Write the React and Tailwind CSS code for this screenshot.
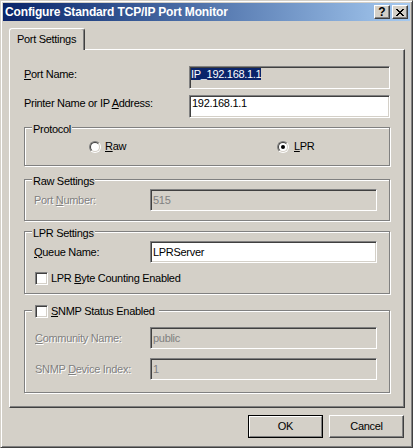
import React from "react";

const SUNKEN =
  "border border-t-[#808080] border-l-[#808080] border-b-white border-r-white shadow-[inset_1px_1px_0_#404040,inset_-1px_-1px_0_#D4D0C8]";
const RAISED =
  "border border-t-white border-l-white border-b-[#404040] border-r-[#404040] shadow-[inset_-1px_-1px_0_#808080]";
const DISABLED = "text-[#808080] [text-shadow:1px_1px_0_#fff]";

function CaptionBtn({ children }) {
  return (
    <div className={"w-[16px] h-[14px] bg-[#D4D0C8] flex items-center justify-center " + RAISED}>
      {children}
    </div>
  );
}

function Radio({ checked }) {
  return (
    <div className="w-[12px] h-[12px] shrink-0 rounded-full border border-t-[#808080] border-l-[#808080] border-b-white border-r-white">
      <div className="w-full h-full rounded-full border border-t-[#404040] border-l-[#404040] border-b-[#D4D0C8] border-r-[#D4D0C8] bg-white flex items-center justify-center">
        {checked && <div className="w-[4px] h-[4px] rounded-full bg-black" />}
      </div>
    </div>
  );
}

function Checkbox() {
  return <div className={"w-[13px] h-[13px] shrink-0 bg-white " + SUNKEN} />;
}

function Group({ title, className, children }) {
  return (
    <div
      className={
        "relative border border-[#808080] shadow-[inset_1px_1px_0_#fff,1px_1px_0_#fff] " + className
      }
    >
      {title}
      {children}
    </div>
  );
}

function GroupTitle({ children }) {
  return (
    <div className="absolute -top-[5px] left-[7px] px-px bg-[#D4D0C8] leading-[13px]">{children}</div>
  );
}

export default function App() {
  return (
    <div className="w-[413px] h-[448px] bg-[#D4D0C8] border border-t-[#D4D0C8] border-l-[#D4D0C8] border-b-[#404040] border-r-[#404040] shadow-[inset_1px_1px_0_#fff,inset_-1px_-1px_0_#808080] p-[2px] flex flex-col font-['Liberation_Sans',Arial,sans-serif] text-[11px] leading-[13px] tracking-[-0.3px] text-black select-none">
      {/* Title bar */}
      <div className="h-[18px] shrink-0 flex items-center bg-linear-to-r from-[#0A246A] to-[#A6CAF0] pl-[2px] pr-[2px]">
        <span className="flex-1 text-white font-bold text-[12px] leading-[14px] tracking-[-0.15px] whitespace-nowrap">
          Configure Standard TCP/IP Port Monitor
        </span>
        <div className="flex gap-[2px]">
          <CaptionBtn>
            <span className="font-bold text-[12px] leading-none tracking-normal">?</span>
          </CaptionBtn>
          <CaptionBtn>
            <svg width="8" height="7" viewBox="0 0 8 7" shapeRendering="crispEdges">
              <path
                fill="#000"
                d="M0 0h2v1H0z M6 0h2v1H6z M1 1h2v1H1z M5 1h2v1H5z M2 2h4v1H2z M3 3h2v1H3z M2 4h4v1H2z M1 5h2v1H1z M5 5h2v1H5z M0 6h2v1H0z M6 6h2v1H6z"
              />
            </svg>
          </CaptionBtn>
        </div>
      </div>

      {/* Body */}
      <div className="flex-1 flex flex-col pl-[6px] pr-[5px] pt-[7px]">
        {/* Tab */}
        <div className="relative z-10 -mb-px w-[76px] h-[22px] bg-[#D4D0C8] border-t border-l border-r border-t-white border-l-white border-r-[#404040] rounded-t-[3px] shadow-[inset_-1px_0_0_#808080] pl-[7px] pt-[4px] whitespace-nowrap">
          Port Settings
        </div>

        {/* Panel */}
        <div className="h-[359px] border border-t-white border-l-white border-b-[#404040] border-r-[#404040] shadow-[inset_-1px_-1px_0_#808080] pt-[16px] pl-[14px] pr-[14px] flex flex-col">
          <div className="flex h-[23px]">
            <div className="w-[165px] pt-[2px]">
              <span className="underline">P</span>ort Name:
            </div>
            <div className={"flex-1 bg-[#D4D0C8] pt-px pl-px " + SUNKEN}>
              <span className="bg-[#0A246A] text-white">IP_192.168.1.1</span>
            </div>
          </div>

          <div className="flex h-[23px] mt-[6px]">
            <div className="w-[165px] pt-[2px]">
              Printer Name or IP <span className="underline">A</span>ddress:
            </div>
            <div className={"flex-1 bg-white pt-px pl-[2px] " + SUNKEN}>192.168.1.1</div>
          </div>

          {/* Protocol */}
          <Group title={<GroupTitle>Protocol</GroupTitle>} className="mt-[9px] h-[39px]">
            <div className="h-full flex items-center pl-[64px]">
              <div className="w-[188px] flex items-center">
                <Radio />
                <span className="ml-[4px]">
                  <span className="underline">R</span>aw
                </span>
              </div>
              <div className="flex items-center">
                <Radio checked />
                <span className="ml-[5px]">
                  <span className="underline">L</span>PR
                </span>
              </div>
            </div>
          </Group>

          {/* Raw Settings */}
          <Group title={<GroupTitle>Raw Settings</GroupTitle>} className="mt-[13px] pt-[9px] pb-[9px]">
            <div className="flex items-center h-[22px] pl-[9px]">
              <div className={"w-[116px] " + DISABLED}>
                Port <span className="underline">N</span>umber:
              </div>
              <div className={"w-[227px] h-[22px] flex items-center pl-[2px] text-[#808080] " + SUNKEN}>515</div>
            </div>
          </Group>

          {/* LPR Settings */}
          <Group title={<GroupTitle>LPR Settings</GroupTitle>} className="mt-[10px] pt-[9px] pb-[8px]">
            <div className="flex items-center h-[22px] pl-[9px]">
              <div className="w-[116px]">
                <span className="underline">Q</span>ueue Name:
              </div>
              <div className={"w-[227px] h-[22px] flex items-center pl-[2px] bg-white " + SUNKEN}>LPRServer</div>
            </div>
            <div className="mt-[9px] h-[13px] flex items-center pl-[10px]">
              <Checkbox />
              <span className="ml-[3px]">
                LPR <span className="underline">B</span>yte Counting Enabled
              </span>
            </div>
          </Group>

          {/* SNMP */}
          <Group
            title={
              <div className="absolute -top-[6px] left-[7px] h-[13px] flex items-center pl-[3px] pr-[4px] bg-[#D4D0C8]">
                <Checkbox />
                <span className="ml-[3px]">
                  <span className="underline">S</span>NMP Status Enabled
                </span>
              </div>
            }
            className="mt-[16px] pt-[16px] pb-[12px]"
          >
            <div className="flex items-center h-[22px] pl-[10px]">
              <div className={"w-[115px] " + DISABLED}>
                <span className="underline">C</span>ommunity Name:
              </div>
              <div className={"w-[227px] h-[22px] flex items-center pl-[2px] text-[#808080] " + SUNKEN}>public</div>
            </div>
            <div className="flex items-center h-[22px] pl-[10px] mt-[9px]">
              <div className={"w-[115px] " + DISABLED}>
                SNMP <span className="underline">D</span>evice Index:
              </div>
              <div className={"w-[227px] h-[22px] flex items-center pl-[2px] text-[#808080] " + SUNKEN}>1</div>
            </div>
          </Group>
        </div>

        {/* Buttons */}
        <div className="flex justify-end gap-[6px] mt-[7px] pr-px">
          <button type="button" className="w-[75px] h-[23px] border border-black bg-[#D4D0C8] p-0">
            <div className="w-full h-full border border-t-white border-l-white border-b-[#808080] border-r-[#808080] flex items-center justify-center">
              OK
            </div>
          </button>
          <button
            type="button"
            className={"w-[75px] h-[23px] bg-[#D4D0C8] flex items-center justify-center p-0 " + RAISED}
          >
            Cancel
          </button>
        </div>
      </div>
    </div>
  );
}
